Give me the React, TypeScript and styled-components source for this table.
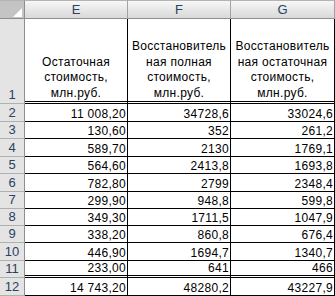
import styled, { createGlobalStyle } from "styled-components";

const GlobalStyle = createGlobalStyle`
  html, body {
    margin: 0;
    background: #fff;
  }

  * {
    box-sizing: border-box;
  }
`;

const COLUMNS = ["E", "F", "G"];

const TITLES = [
  ["Остаточная", "стоимость,", "млн.руб."],
  ["Восстановитель", "ная полная", "стоимость,", "млн.руб."],
  ["Восстановитель", "ная остаточная", "стоимость,", "млн.руб."],
];

type Row = { n: number; h: number; values: string[]; double?: boolean };

const ROWS: Row[] = [
  { n: 2, h: 18, values: ["11 008,20", "34728,6", "33024,6"] },
  { n: 3, h: 17, values: ["130,60", "352", "261,2"] },
  { n: 4, h: 18, values: ["589,70", "2130", "1769,1"] },
  { n: 5, h: 17, values: ["564,60", "2413,8", "1693,8"] },
  { n: 6, h: 18, values: ["782,80", "2799", "2348,4"] },
  { n: 7, h: 17, values: ["299,90", "948,8", "599,8"] },
  { n: 8, h: 17, values: ["349,30", "1711,5", "1047,9"] },
  { n: 9, h: 17, values: ["338,20", "860,8", "676,4"] },
  { n: 10, h: 18, values: ["446,90", "1694,7", "1340,7"] },
  { n: 11, h: 17, values: ["233,00", "641", "466"], double: true },
  { n: 12, h: 18, values: ["14 743,20", "48280,2", "43227,9"] },
];

const HEADER_H = 19;
const TITLE_H = 85;

const Sheet = styled.div<{ $rows: string }>`
  display: grid;
  grid-template-columns: 25px 103px 103px 104px;
  grid-template-rows: ${(p) => p.$rows};
  font-family: "Liberation Sans", Arial, sans-serif;
  font-size: 12px;
  color: #000;
`;

const Corner = styled.div`
  display: flex;
  justify-content: flex-end;
  align-items: flex-end;
  padding: 0 2px 1px 0;
  background: #c4c4c4;
  border-top: 1px solid #b4b4b4;
  border-right: 1px solid #8e8e8e;
  border-bottom: 1px solid #8e8e8e;
`;

const ColHead = styled.div`
  display: flex;
  justify-content: center;
  align-items: center;
  background: linear-gradient(to bottom, #f7f7f7, #e6e6e6 55%, #d9d9d9);
  border-top: 1px solid #b4b4b4;
  border-right: 1px solid #a2a2a2;
  border-bottom: 1px solid #8e8e8e;
  color: #2a4160;
  font-size: 13px;
`;

const RowHead = styled.div<{ $bottom?: boolean }>`
  display: flex;
  justify-content: center;
  align-items: ${(p) => (p.$bottom ? "flex-end" : "center")};
  padding-bottom: ${(p) => (p.$bottom ? "1px" : "0")};
  background: #e4e4e4;
  border-right: 1px solid #8e8e8e;
  border-bottom: 1px solid #b0b0b0;
  color: #2a4160;
  font-size: 13px;
  line-height: 14px;
`;

const Title = styled.div`
  display: flex;
  flex-direction: column;
  justify-content: flex-end;
  align-items: center;
  overflow: hidden;
  border-right: 1px solid #000;
  border-bottom: 3px double #000;
  line-height: 15.5px;
  letter-spacing: 0.3px;
  white-space: nowrap;
`;

const Num = styled.div<{ $double?: boolean }>`
  display: flex;
  justify-content: flex-end;
  align-items: flex-end;
  padding-right: 1px;
  border-right: 1px solid #000;
  border-bottom: ${(p) => (p.$double ? "3px double #000" : "1px solid #000")};
  line-height: 14px;
  letter-spacing: 0.3px;
  white-space: nowrap;
`;

export default function App() {
  const rows = [HEADER_H, TITLE_H, ...ROWS.map((r) => r.h)]
    .map((h) => `${h}px`)
    .join(" ");

  return (
    <>
      <GlobalStyle />
      <Sheet $rows={rows}>
        <Corner>
          <svg width="9" height="9" viewBox="0 0 9 9">
            <polygon points="9,0 9,9 0,9" fill="#fff" />
          </svg>
        </Corner>
        {COLUMNS.map((c) => (
          <ColHead key={c}>{c}</ColHead>
        ))}

        <RowHead $bottom>1</RowHead>
        {TITLES.map((lines, i) => (
          <Title key={i}>
            {lines.map((l) => (
              <span key={l}>{l}</span>
            ))}
          </Title>
        ))}

        {ROWS.map((r) => [
          <RowHead key={`h${r.n}`}>{r.n}</RowHead>,
          ...r.values.map((v, i) => (
            <Num key={`${r.n}-${i}`} $double={r.double}>
              {v}
            </Num>
          )),
        ])}
      </Sheet>
    </>
  );
}
